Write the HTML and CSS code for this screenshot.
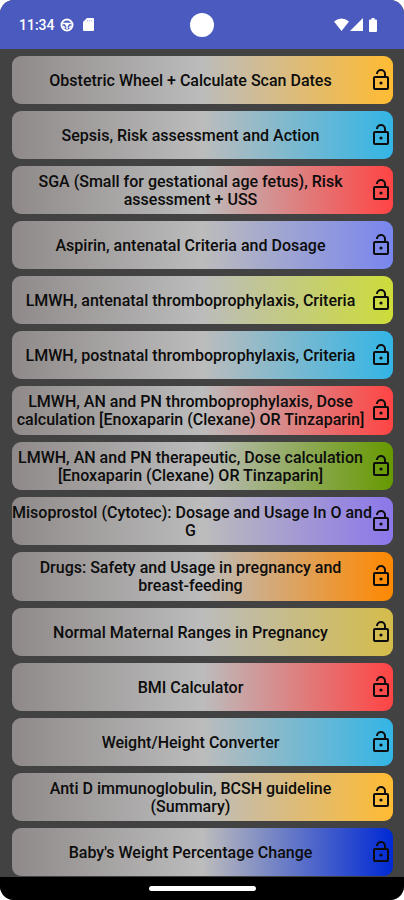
FILE: index.html
```html
<!DOCTYPE html>
<html lang="en">
<head>
<meta charset="UTF-8" />
<meta name="viewport" content="width=device-width, initial-scale=1" />
<title>Obstetric Tools</title>
<link rel="stylesheet" href="styles.css">
</head>
<body>

<svg class="sprite" aria-hidden="true">
  <symbol id="lock" viewBox="0 0 24 24">
    <rect x="5" y="9" width="14" height="12" rx="1" fill="none" stroke="currentColor" stroke-width="2" />
    <path d="M8 6a4 4 0 0 1 8 0v3" fill="none" stroke="currentColor" stroke-width="2" />
    <circle cx="12" cy="15" r="1.6" fill="currentColor" />
  </symbol>
</svg>

<div class="screen">
  <header class="status-bar">
    <div class="status-left">
      <span class="time">11:34</span>
      <svg width="14" height="14" viewBox="0 0 14 14" aria-hidden="true">
        <circle cx="7" cy="7" r="5.5" fill="none" stroke="#fff" stroke-width="2" />
        <path d="M3 5.500h8M7 6v5M3 8l2 2M11 8l-2 2" fill="none" stroke="#fff" stroke-width="1.500" />
        <circle cx="7" cy="6.500" r="1.800" fill="#fff" />
      </svg>
      <svg class="sd-card" width="11" height="13" viewBox="0 0 11 13" aria-hidden="true">
        <path d="M4 0h6a1 1 0 0 1 1 1v11a1 1 0 0 1-1 1H1a1 1 0 0 1-1-1V4z" fill="#fff" />
        <path d="M4.500 2v1.500M6.500 2v1.500M8.500 2v1.500" stroke="#b9c0ec" stroke-width="1" />
      </svg>
    </div>
    <div class="camera"></div>
    <div class="status-right">
      <svg width="15" height="13" viewBox="0 0 15 13" aria-hidden="true">
        <path d="M0 3.500Q7.500-2.500 15 3.500L7.500 13z" fill="#fff" />
      </svg>
      <svg width="13" height="13" viewBox="0 0 13 13" aria-hidden="true">
        <path d="M13 0v13H0z" fill="#fff" />
      </svg>
      <svg class="battery" width="8" height="14" viewBox="0 0 8 14" aria-hidden="true">
        <path d="M2.500 0h3v1.500H7a1 1 0 0 1 1 1V13a1 1 0 0 1-1 1H1a1 1 0 0 1-1-1V2.500a1 1 0 0 1 1-1h1.500z" fill="#fff" />
      </svg>
    </div>
  </header>

  <main class="menu">
    <button class="item amber"><span>Obstetric Wheel + Calculate Scan Dates</span><svg><use href="#lock" /></svg></button>
    <button class="item sky"><span>Sepsis, Risk assessment and Action</span><svg><use href="#lock" /></svg></button>
    <button class="item red"><span>SGA (Small for gestational age fetus), Risk assessment + USS</span><svg><use href="#lock" /></svg></button>
    <button class="item periwinkle"><span>Aspirin, antenatal Criteria and Dosage</span><svg><use href="#lock" /></svg></button>
    <button class="item lime"><span>LMWH, antenatal thromboprophylaxis, Criteria</span><svg><use href="#lock" /></svg></button>
    <button class="item sky"><span>LMWH, postnatal thromboprophylaxis, Criteria</span><svg><use href="#lock" /></svg></button>
    <button class="item red"><span>LMWH, AN and PN thromboprophylaxis, Dose calculation [Enoxaparin (Clexane) OR Tinzaparin]</span><svg><use href="#lock" /></svg></button>
    <button class="item green"><span>LMWH, AN and PN therapeutic, Dose calculation [Enoxaparin (Clexane) OR Tinzaparin]</span><svg><use href="#lock" /></svg></button>
    <button class="item purple"><span class="keep">Misoprostol (Cytotec): Dosage and Usage In O and<br />G</span><svg><use href="#lock" /></svg></button>
    <button class="item orange"><span>Drugs: Safety and Usage in pregnancy and <b class="keep">breast-feeding</b></span><svg><use href="#lock" /></svg></button>
    <button class="item gold"><span>Normal Maternal Ranges in Pregnancy</span><svg><use href="#lock" /></svg></button>
    <button class="item red"><span>BMI Calculator</span><svg><use href="#lock" /></svg></button>
    <button class="item sky"><span>Weight/Height Converter</span><svg><use href="#lock" /></svg></button>
    <button class="item amber"><span>Anti D immunoglobulin, BCSH guideline (Summary)</span><svg><use href="#lock" /></svg></button>
    <button class="item blue"><span>Baby's Weight Percentage Change</span><svg><use href="#lock" /></svg></button>
  </main>

  <footer class="nav-bar"><div class="handle"></div></footer>
</div>

</body>
</html>
```
FILE: styles.css
```css
* {
  box-sizing: border-box;
}

body {
  margin: 0;
  background-color: #fff;
  font-family: Roboto, sans-serif;
}

.sprite {
  display: none;
}

.screen {
  display: flex;
  flex-direction: column;
  min-height: 100vh;
  background-color: #424242;
  border-radius: 14px;
  overflow: hidden;
}

/* Status bar */
.status-bar {
  display: grid;
  grid-template-columns: 1fr auto 1fr;
  align-items: center;
  height: 49px;
  background-color: #4a5abf;
  color: #fff;
}

.status-left,
.status-right {
  display: flex;
  align-items: center;
}

.status-left {
  gap: 5px;
  padding-left: 19px;
}

.sd-card {
  margin-left: 4px;
}

.status-right {
  justify-content: flex-end;
  gap: 1px;
  padding-right: 27px;
}

.battery {
  margin-left: 5px;
}

.time {
  font-size: 14px;
  font-weight: 500;
}

.camera {
  width: 24px;
  height: 24px;
  border-radius: 50%;
  background-color: #fff;
}

/* Menu buttons */
.menu {
  flex: 1;
  display: flex;
  flex-direction: column;
  gap: 7px;
  padding: 7px 11px 1px 12px;
}

.item {
  --color: #fcbc3f;
  flex: 1;
  display: flex;
  align-items: center;
  min-height: 48px;
  padding: 0;
  border: none;
  border-radius: 9px;
  background: linear-gradient(to right, #8f8a89, #bcbcbc 50%, var(--color));
  color: #0c0c0c;
  font-family: inherit;
  font-size: 16px;
  font-weight: 500;
  line-height: 18px;
  text-align: center;
  cursor: pointer;
}

.item span {
  flex: 1;
  min-width: 0;
  padding-top: 2px;
}

.item .keep {
  font-weight: 500;
  white-space: nowrap;
}

.item svg {
  flex: none;
  width: 24px;
  height: 24px;
}

.amber { --color: #ffbb33; }
.sky { --color: #33b5e5; }
.red { --color: #ff4444; }
.periwinkle { --color: #7986ee; }
.lime { --color: #cddc39; }
.green { --color: #669900; }
.purple { --color: #8c77ea; }
.orange { --color: #ff8800; }
.gold { --color: #d4bc4a; }
.blue { --color: #0029d4; }

/* Gesture bar */
.nav-bar {
  display: flex;
  align-items: center;
  justify-content: center;
  height: 23px;
  background-color: #000;
}

.handle {
  width: 107px;
  height: 5px;
  border-radius: 3px;
  background-color: #fff;
}
```
